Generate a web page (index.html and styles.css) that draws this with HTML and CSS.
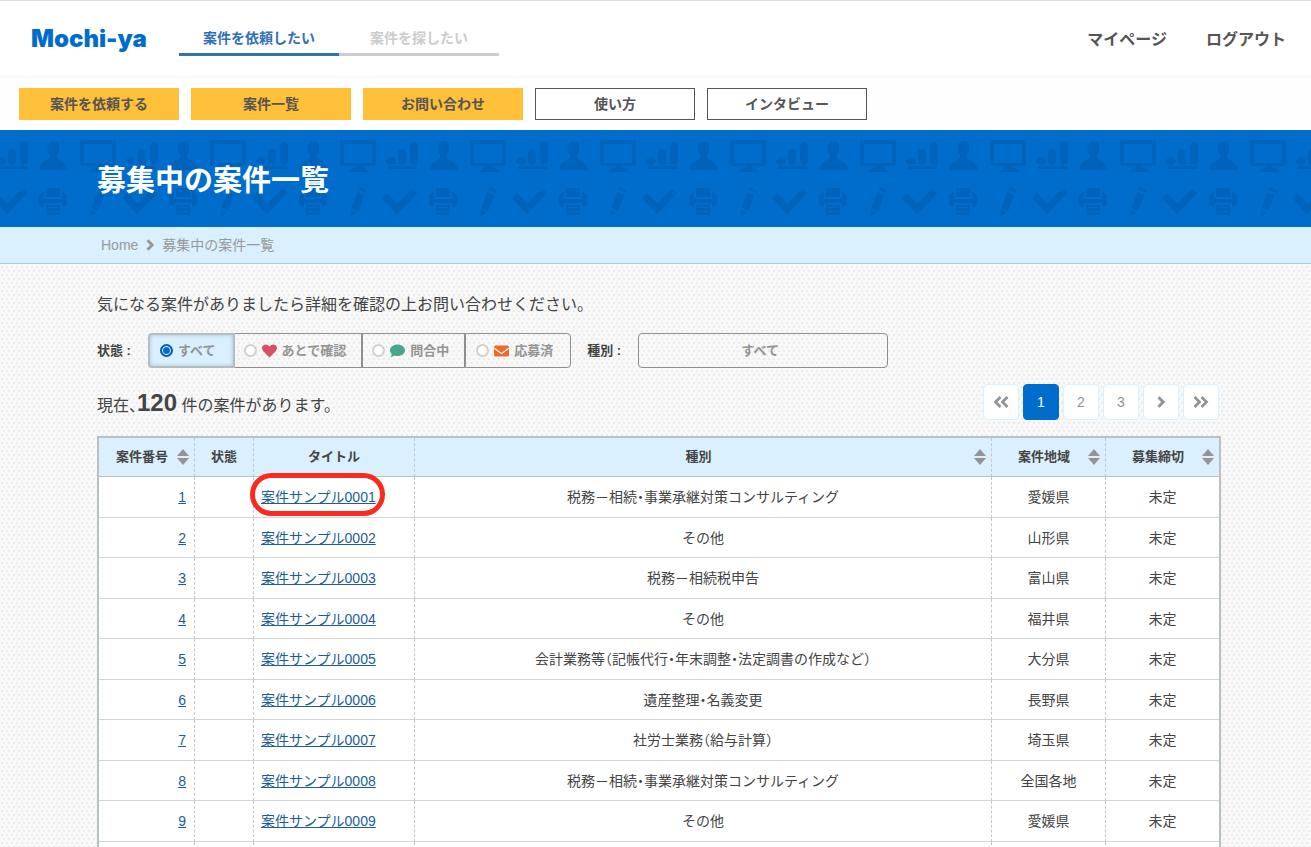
FILE: index.html
```html
<!DOCTYPE html>
<html lang="ja">
<head>
<meta charset="utf-8">
<meta name="viewport" content="width=device-width, initial-scale=1">
<title>募集中の案件一覧</title>
<link rel="stylesheet" href="styles.css">
</head>
<body>
<svg class="sprite" aria-hidden="true">
  <symbol id="sort" viewBox="0 0 12 16"><path d="M6 0l6 7H0zM0 9h12l-6 7z"/></symbol>
  <symbol id="next" viewBox="0 0 8 12"><path d="M1.500 1.200L6.200 6l-4.700 4.800" fill="none" stroke="currentColor" stroke-width="3"/></symbol>
  <symbol id="double" viewBox="0 0 16 12"><path d="M1.500 1L6.500 6l-5 5M8.500 1l5 5-5 5" fill="none" stroke="currentColor" stroke-width="2.800"/></symbol>
</svg>

<header class="header">
  <a class="logo" href="#">Mochi-ya</a>
  <nav class="tabs">
    <a class="tab tab-active" href="#">案件を依頼したい</a>
    <a class="tab" href="#">案件を探したい</a>
  </nav>
  <nav class="account">
    <a href="#">マイページ</a>
    <a href="#">ログアウト</a>
  </nav>
</header>

<nav class="menu">
  <a class="menu-item menu-main" href="#">案件を依頼する</a>
  <a class="menu-item menu-main" href="#">案件一覧</a>
  <a class="menu-item menu-main" href="#">お問い合わせ</a>
  <a class="menu-item" href="#">使い方</a>
  <a class="menu-item" href="#">インタビュー</a>
</nav>

<div class="banner">
  <svg class="banner-art" width="100%" height="100%" aria-hidden="true">
    <defs>
      <pattern id="tools" width="130" height="97" patternUnits="userSpaceOnUse" patternTransform="translate(32 0)">
        <g fill="#0063bb">
          <path d="M21.500 11c4 0 6.500 2.500 6 7.500 0 3-1 5-2.500 7v3c4 2.500 10 3 11 11.500H7c1-8.500 7-9 11-11.500v-3c-1.500-2-2.500-4-2.500-7-.5-5 2-7.500 6-7.500z"/>
          <path fill-rule="evenodd" d="M50 10h32q2 0 2 2v22q0 2-2 2H70.500v1.500q4 .5 5 2.500h1v2h-19v-2h1q1-2 5-2.500V36H50q-2 0-2-2V12q0-2 2-2zm2 4v19h28V14z"/>
          <ellipse cx="99" cy="31" rx="5" ry="4"/>
          <rect x="106" y="19" width="8" height="16" rx="4"/>
          <rect x="118" y="12" width="8" height="23" rx="4"/>
          <path d="M96 36h29v3H96z"/>
          <path d="M14 58h14v9H14z"/>
          <path d="M10 62h2v7h18v-7h2l3 4v8l-3 3h-2v-4H12v4h-2l-3-3v-8z"/>
          <path fill-rule="evenodd" d="M14 75h14v10H14zm2 2v1h10v-1zm0 4v1h10v-1z"/>
          <path d="M68 57l7 3-1 3-8-3zM65.500 62l7 3-6.500 16-7-3zM58.500 79.500l6.500 2.500-6 5z"/>
          <path d="M90 68l5-5 10.500 10.500L120 58l5.500 5L105 84.500z"/>
        </g>
      </pattern>
    </defs>
    <rect width="100%" height="100%" fill="url(#tools)"/>
  </svg>
  <h1 class="banner-title">募集中の案件一覧</h1>
</div>

<nav class="crumbs">
  <a href="#">Home</a>
  <svg class="crumb-arrow"><use href="#next"/></svg>
  <span>募集中の案件一覧</span>
</nav>

<main class="main">
  <p class="lead">気になる案件がありましたら詳細を確認の上お問い合わせください。</p>

  <form class="filters">
    <span class="filter-name" id="state-name">状態 :</span>
    <div class="segments" role="radiogroup" aria-labelledby="state-name">
      <label class="segment segment-on"><input class="radio" type="radio" name="state" checked>すべて</label>
      <label class="segment"><input class="radio" type="radio" name="state">
        <svg class="state-icon heart" viewBox="0 0 15 14"><path d="M7.500 13.500L1.300 7.200C-.5 5.300-.3 2.500 1.500 1.200c1.800-1.300 4.200-.8 6 1.300 1.800-2.100 4.200-2.600 6-1.300 1.800 1.300 2 4.100.2 6z"/></svg>あとで確認</label>
      <label class="segment"><input class="radio" type="radio" name="state">
        <svg class="state-icon bubble" viewBox="0 0 15 14"><path d="M7.500.5C11.600.5 15 3 15 6.300s-3.400 5.800-7.500 5.800c-1.200 0-2.300-.2-3.300-.6C3.200 12.300 1.800 13.200.2 13.200c1-1.100 1.500-2.200 1.600-3C.7 9.100 0 7.800 0 6.300 0 3 3.400.5 7.500.5z"/></svg>問合中</label>
      <label class="segment"><input class="radio" type="radio" name="state">
        <svg class="state-icon mail" viewBox="0 0 15 14"><rect y="1.500" width="15" height="11" rx="1.500"/><path d="M.3 4.300l6 4.500q1.200.8 2.400 0l6-4.500" fill="none" stroke="#fff" stroke-width="1.100"/></svg>応募済</label>
    </div>
    <label class="filter-name filter-kind" for="kind">種別 :</label>
    <select class="kind" id="kind"><option>すべて</option></select>
  </form>

  <div class="summary">
    <p class="count">現在、<strong class="count-number">120</strong> 件の案件があります。</p>
    <nav class="pages" aria-label="ページ">
      <a class="page" href="#" aria-label="最初"><svg class="double flip"><use href="#double"/></svg></a>
      <a class="page page-on" href="#">1</a>
      <a class="page" href="#">2</a>
      <a class="page" href="#">3</a>
      <a class="page" href="#" aria-label="次"><svg class="single"><use href="#next"/></svg></a>
      <a class="page" href="#" aria-label="最後"><svg class="double"><use href="#double"/></svg></a>
    </nav>
  </div>

  <table class="jobs">
    <colgroup><col class="col-no"><col class="col-state"><col class="col-title"><col><col class="col-area"><col class="col-due"></colgroup>
    <thead>
      <tr>
        <th><button class="sort" type="button"><span>案件番号</span><svg class="sort-icon"><use href="#sort"/></svg></button></th>
        <th>状態</th>
        <th>タイトル</th>
        <th><button class="sort" type="button"><span>種別</span><svg class="sort-icon"><use href="#sort"/></svg></button></th>
        <th><button class="sort" type="button"><span>案件地域</span><svg class="sort-icon"><use href="#sort"/></svg></button></th>
        <th><button class="sort" type="button"><span>募集締切</span><svg class="sort-icon"><use href="#sort"/></svg></button></th>
      </tr>
    </thead>
    <tbody>
      <tr><td class="no"><a href="#">1</a></td><td></td><td class="title"><a href="#">案件サンプル0001</a><span class="ring"></span></td><td>税務－相続・事業承継対策コンサルティング</td><td>愛媛県</td><td>未定</td></tr>
      <tr><td class="no"><a href="#">2</a></td><td></td><td class="title"><a href="#">案件サンプル0002</a></td><td>その他</td><td>山形県</td><td>未定</td></tr>
      <tr><td class="no"><a href="#">3</a></td><td></td><td class="title"><a href="#">案件サンプル0003</a></td><td>税務－相続税申告</td><td>富山県</td><td>未定</td></tr>
      <tr><td class="no"><a href="#">4</a></td><td></td><td class="title"><a href="#">案件サンプル0004</a></td><td>その他</td><td>福井県</td><td>未定</td></tr>
      <tr><td class="no"><a href="#">5</a></td><td></td><td class="title"><a href="#">案件サンプル0005</a></td><td>会計業務等（記帳代行・年末調整・法定調書の作成など）</td><td>大分県</td><td>未定</td></tr>
      <tr><td class="no"><a href="#">6</a></td><td></td><td class="title"><a href="#">案件サンプル0006</a></td><td>遺産整理・名義変更</td><td>長野県</td><td>未定</td></tr>
      <tr><td class="no"><a href="#">7</a></td><td></td><td class="title"><a href="#">案件サンプル0007</a></td><td>社労士業務（給与計算）</td><td>埼玉県</td><td>未定</td></tr>
      <tr><td class="no"><a href="#">8</a></td><td></td><td class="title"><a href="#">案件サンプル0008</a></td><td>税務－相続・事業承継対策コンサルティング</td><td>全国各地</td><td>未定</td></tr>
      <tr><td class="no"><a href="#">9</a></td><td></td><td class="title"><a href="#">案件サンプル0009</a></td><td>その他</td><td>愛媛県</td><td>未定</td></tr>
      <tr><td class="no"></td><td></td><td></td><td></td><td></td><td></td></tr>
    </tbody>
  </table>
</main>
</body>
</html>
```
FILE: styles.css
```css
* { box-sizing: border-box; }
html { height: 100%; overflow: hidden; }
body {
  height: 100%;
  margin: 0;
  overflow: hidden;
  color: #444;
  font-family: "Liberation Sans", "Noto Sans CJK JP", sans-serif;
  font-size: 16px;
  line-height: 24px;
  background-color: #f8f8f8;
  background-image:
    radial-gradient(circle at 1px 1px, #ececec 1px, transparent 1px),
    radial-gradient(circle at 1px 1px, #ececec 1px, transparent 1px);
  background-size: 5px 8px;
  background-position: 1px 2px, 3px 6px;
}
a { color: inherit; text-decoration: none; }
h1, p { margin: 0; }
svg { display: block; flex: none; }
.sprite { position: absolute; width: 0; height: 0; }

.header {
  display: flex;
  align-items: center;
  height: 78px;
  padding: 0 25px 2px 31px;
  border-top: 1px solid #ddd;
  background: linear-gradient(#fff 73px, #f8f8f8 77px);
}
.logo {
  width: 148px;
  color: #006dcc;
  font-family: Inter, sans-serif;
  font-size: 24px;
  font-weight: 900;
}
.tabs { display: flex; }
.tab {
  width: 160px;
  height: 35px;
  border-bottom: 3px solid #ccc;
  color: #ccc;
  font-size: 14px;
  font-weight: 700;
  line-height: 34px;
  text-align: center;
}
.tab-active { border-color: #3370b7; color: #3370b7; }
.account {
  display: flex;
  gap: 39px;
  margin-left: auto;
  padding-top: 2px;
  color: #555;
  font-weight: 700;
}

.menu {
  display: flex;
  gap: 12px;
  padding: 10px 19px;
  background: #fefefe;
}
.menu-item {
  width: 160px;
  height: 32px;
  border: 1px solid #555;
  background: #fff;
  color: #555;
  font-size: 14px;
  font-weight: 700;
  line-height: 30px;
  text-align: center;
}
.menu-main { border-color: #ffc03a; background: #ffc03a; }

.banner {
  position: relative;
  padding: 31px 97px 26px;
  background: #006dcc;
}
.banner-art { position: absolute; inset: 0; }
.banner-title {
  position: relative;
  color: #fff;
  font-size: 29px;
  font-weight: 700;
  line-height: 40px;
}

.crumbs {
  display: flex;
  align-items: center;
  gap: 8px;
  height: 37px;
  padding: 0 101px;
  border-bottom: 1px solid #a4cdec;
  background: #daf0fe;
  color: #999;
  font-size: 14px;
}
.crumb-arrow { width: 8px; height: 12px; }

.main { padding: 29px 90px 0 97px; }
.filters {
  display: flex;
  align-items: center;
  margin-top: 16px;
}
.filter-name {
  width: 51px;
  font-size: 13px;
  font-weight: 700;
}
.filter-kind { margin-left: 16px; }
.segments { display: flex; }
.segment {
  display: flex;
  align-items: center;
  gap: 5px;
  height: 35px;
  padding: 0 15px 0 9px;
  border: 1px solid #8f8f8f;
  color: #949494;
  font-size: 13px;
  font-weight: 700;
}
.segment:last-child { padding: 0 17px 0 10px; border-radius: 0 4px 4px 0; }
.segment-on {
  padding: 0 17px 0 10px;
  border: 2px solid #b5bdc1;
  border-radius: 4px 0 0 4px;
  background: #daf0fe;
  box-shadow: inset 0 0 4px #a9c4d4;
}
.segment-on + .segment { border-left: 0; }
.radio {
  appearance: none;
  width: 13px;
  height: 13px;
  margin: 0;
  border: 2px solid #d0d0d0;
  border-radius: 50%;
  background: #fff;
}
.radio:checked {
  border-color: #0060b6;
  background: #006dcc;
  box-shadow: inset 0 0 0 1px #fff;
}
.state-icon { width: 15px; height: 14px; }
.heart { fill: #d94f66; }
.bubble { fill: #48a68c; }
.mail { fill: #ec6a2c; }
.kind {
  appearance: none;
  width: 250px;
  height: 35px;
  padding: 0 6px 0 0;
  border: 1px solid #8f8f8f;
  border-radius: 4px;
  background: transparent;
  color: #949494;
  font: inherit;
  font-size: 13px;
  font-weight: 700;
  text-align-last: center;
}

.summary {
  display: flex;
  justify-content: space-between;
  align-items: center;
  margin: 16px 2px 16px 0;
}
.count { font-feature-settings: "halt"; padding-top: 4px; }
.count-number { font-size: 24px; }
.pages { display: flex; gap: 4px; }
.page {
  display: flex;
  align-items: center;
  justify-content: center;
  width: 36px;
  height: 36px;
  border: 1px solid #daf0fe;
  border-radius: 4px;
  background: #fff;
  color: #949494;
  font-size: 14px;
}
.page-on { border-color: #006dcc; background: #006dcc; color: #fff; }
.single { width: 8px; height: 12px; }
.double { width: 16px; height: 12px; }
.flip { transform: scaleX(-1); }

.jobs {
  width: 100%;
  border: 2px solid #b9c1c5;
  border-spacing: 0;
  background: #fff;
  table-layout: fixed;
  font-size: 14px;
  text-align: center;
}
.col-no { width: 96px; }
.col-state { width: 59px; }
.col-title { width: 161px; }
.col-area { width: 114px; }
.col-due { width: 113px; }
.jobs th, .jobs td {
  height: 41px;
  padding: 0;
  border-right: 1px dashed #bfc7cb;
  border-bottom: 1px solid #d0d6da;
  line-height: 20px;
  font-feature-settings: "halt";
}
.jobs th {
  height: 39px;
  border-bottom-color: #b9c1c5;
  background: #daf0fe;
  font-size: 13px;
}
.jobs tr:nth-child(even) td { height: 40px; }
.jobs th:last-child, .jobs td:last-child { border-right: 0; }
.sort {
  display: flex;
  align-items: center;
  width: 100%;
  padding: 0 5px 0 8px;
  border: 0;
  background: none;
  color: inherit;
  font: inherit;
}
.sort span { flex: 1; }
.sort-icon { width: 12px; height: 16px; fill: #949494; }
.jobs .no { padding-right: 8px; text-align: right; }
.jobs .title { position: relative; padding-left: 7px; text-align: left; }
.jobs a { color: #1b5e96; text-decoration: underline; }
.ring {
  position: absolute;
  top: -4px;
  left: -4px;
  width: 135px;
  height: 43px;
  border: 5px solid #fb2a1f;
  border-radius: 22px;
}
```
